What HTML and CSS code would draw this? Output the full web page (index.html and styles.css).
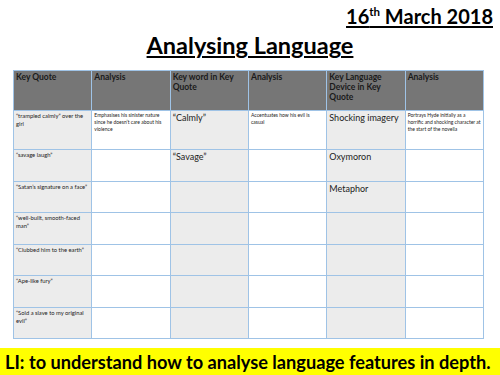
FILE: index.html
```html
<!DOCTYPE html>
<html>
<head>
<meta charset="utf-8">
<link rel="stylesheet" href="styles.css">
</head>
<body>
<div class="slide">
  <div class="date"><span>16<sup>th</sup> March 2018</span></div>
  <h1 class="title">Analysing Language</h1>
  <table class="grid">
    <tr class="head">
      <th>Key Quote</th><th>Analysis</th><th>Key word in Key Quote</th><th>Analysis</th><th>Key Language Device in Key Quote</th><th>Analysis</th>
    </tr>
    <tr class="r1">
      <td class="g sm">“trampled calmly” over the girl</td>
      <td class="xs">Emphasises his sinister nature since he doesn’t care about his violence</td>
      <td class="g md">“Calmly”</td>
      <td class="xs">Accentuates how his evil is casual</td>
      <td class="g md">Shocking imagery</td>
      <td class="xs">Portrays Hyde initially as a horrific and shocking character at the start of the novella</td>
    </tr>
    <tr class="rn">
      <td class="g sm">“savage laugh”</td><td></td><td class="g md">“Savage”</td><td></td><td class="g md">Oxymoron</td><td></td>
    </tr>
    <tr class="rn">
      <td class="g sm">“Satan’s signature on a face”</td><td></td><td class="g"></td><td></td><td class="g md">Metaphor</td><td></td>
    </tr>
    <tr class="rn">
      <td class="g sm">“well-built, smooth-faced man”</td><td></td><td class="g"></td><td></td><td class="g"></td><td></td>
    </tr>
    <tr class="rn">
      <td class="g sm">“Clubbed him to the earth”</td><td></td><td class="g"></td><td></td><td class="g"></td><td></td>
    </tr>
    <tr class="rn">
      <td class="g sm">“Ape-like fury”</td><td></td><td class="g"></td><td></td><td class="g"></td><td></td>
    </tr>
    <tr class="rn">
      <td class="g sm">“Sold a slave to my original evil”</td><td></td><td class="g"></td><td></td><td class="g"></td><td></td>
    </tr>
  </table>
  <div class="banner">LI: to understand how to analyse language features in depth.</div>
</div>
</body>
</html>
```
FILE: styles.css
```css
html, body {
  margin: 0;
  padding: 0;
  background: #ffffff;
}
.slide {
  width: 500px;
  height: 375px;
  overflow: hidden;
  display: flex;
  flex-direction: column;
  font-family: Lato, "Open Sans", sans-serif;
  color: #000;
}
.slide > * { flex-shrink: 0; }
.date {
  text-align: right;
  padding: 4px 7px 0 0;
  height: 27px;
  font-size: 20px;
  font-weight: 700;
  line-height: 25px;
  text-decoration: underline;
  text-decoration-thickness: 2px;
  text-underline-offset: 2px;
}
.date sup {
  font-size: 11.5px;
  line-height: 0;
  vertical-align: 8px;
}
.title {
  margin: 0;
  height: 39px;
  text-align: center;
  font-size: 23.5px;
  font-weight: 700;
  line-height: 28px;
  text-decoration: underline;
  text-decoration-thickness: 2px;
  text-underline-offset: 2px;
}
.grid {
  margin-left: 13px;
  width: 471px;
  border-collapse: collapse;
  table-layout: fixed;
}
.grid th, .grid td {
  border: 1px solid #9fc3e6;
  vertical-align: top;
  text-align: left;
  padding: 1px 2px;
  overflow: hidden;
}
.grid tr.head { height: 40px; }
.grid tr.r1 { height: 39px; }
.grid tr.rn { height: 31.5px; }
.head th {
  background: #767676;
  color: #1a1a1a;
  font-size: 8.5px;
  font-weight: 700;
  line-height: 10px;
  padding-right: 6px;
}
.g { background: #ececec; }
.sm {
  font-size: 5.8px;
  line-height: 8px;
  color: #222;
  padding-top: 2px;
}
.xs {
  font-size: 5px;
  line-height: 7px;
  color: #222;
  padding-top: 2px;
  padding-right: 4px;
}
.md {
  font-size: 9px;
  line-height: 11px;
  color: #222;
}
.banner {
  margin-top: 9px;
  height: 28px;
  background: #ffff00;
  font-size: 18.2px;
  font-weight: 700;
  line-height: 28px;
  padding-left: 5px;
  white-space: nowrap;
}
```
